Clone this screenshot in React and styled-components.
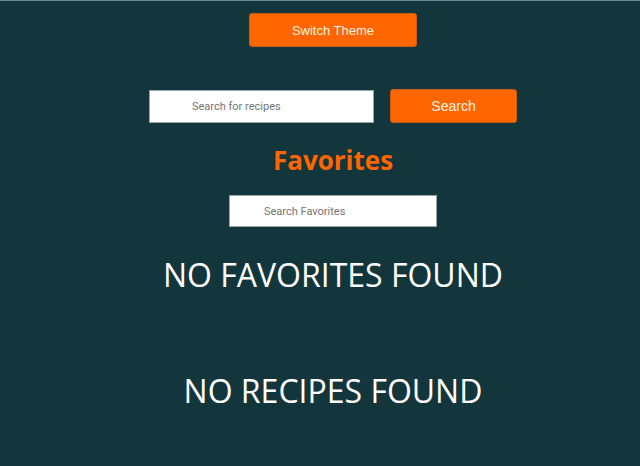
import React from 'react';
import styled, { createGlobalStyle } from 'styled-components';

const GlobalStyle = createGlobalStyle`
  html, body {
    margin: 0;
    padding: 0;
    background: #13353c;
    font-family: "Open Sans", "Noto Sans", sans-serif;
  }
`;

export default function App() {
  return (
    <Page>
      <GlobalStyle />
      <ThemeButton type="button">Switch Theme</ThemeButton>
      <SearchRow>
        <SearchInput placeholder="Search for recipes" $indent="42px" $width="225px" />
        <SearchButton type="button">Search</SearchButton>
      </SearchRow>
      <Heading>Favorites</Heading>
      <SearchInput placeholder="Search Favorites" $indent="34px" $width="208px" $height="32px" />
      <EmptyText>NO FAVORITES FOUND</EmptyText>
      <EmptyText $top="72px">NO RECIPES FOUND</EmptyText>
    </Page>
  );
}

const Page = styled.div`
  width: 640px;
  height: 466px;
  box-sizing: border-box;
  padding: 12px 0 0 26px;
  border-top: 1px solid #6f8a8f;
  display: flex;
  flex-direction: column;
  align-items: center;
  overflow: hidden;
`;

const OrangeButton = styled.button`
  background: #ff6600;
  border: 1px solid #c85a12;
  border-radius: 3px;
  box-sizing: border-box;
  color: #fff3e6;
  cursor: pointer;
  font-family: "Liberation Sans", Arial, sans-serif;
  font-size: 13px;
  padding: 0;
`;

const ThemeButton = styled(OrangeButton)`
  width: 168px;
  height: 34px;
`;

const SearchRow = styled.div`
  display: flex;
  align-items: center;
  gap: 16px;
  margin-top: 42px;
`;

const SearchButton = styled(OrangeButton)`
  width: 127px;
  height: 34px;
  font-size: 14px;
`;

const SearchInput = styled.input`
  width: ${(p) => p.$width};
  height: ${(p) => p.$height || '33px'};
  box-sizing: border-box;
  background: #fff;
  border: 1px solid #9aa3a5;
  padding: 0 0 0 ${(p) => p.$indent};
  font-family: Roboto, "Liberation Sans", sans-serif;
  font-size: 11px;
  outline: none;
  &::placeholder {
    color: #757575;
  }
`;

const Heading = styled.h2`
  margin: 21px 0 19px;
  color: #ff6600;
  font-size: 26px;
  font-weight: 700;
  line-height: 32px;
`;

const EmptyText = styled.div`
  margin-top: ${(p) => p.$top || '26px'};
  color: #ffffff;
  font-size: 32px;
  line-height: 44px;
`;
